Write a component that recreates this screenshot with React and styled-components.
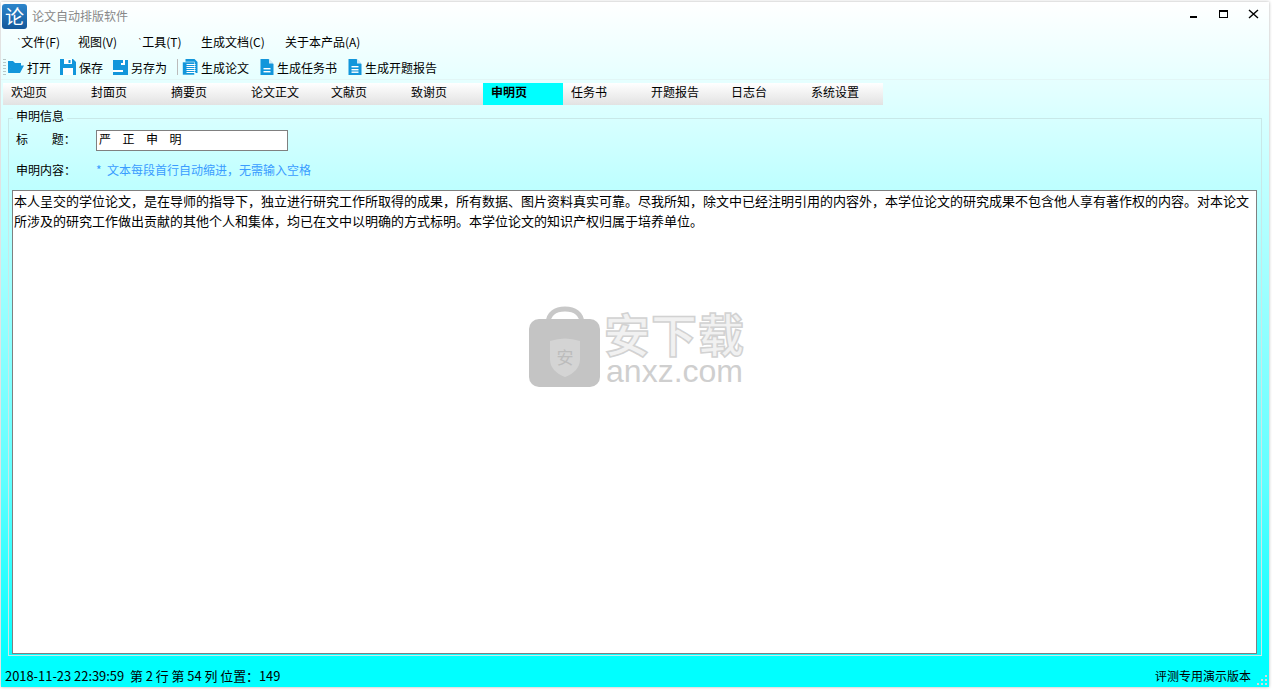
import React from "react";
import styled, { createGlobalStyle } from "styled-components";

const Global = createGlobalStyle`
  html, body {
    margin: 0;
    padding: 0;
    background: #fff;
    overflow: hidden;
  }
`;

const Page = styled.div`
  width: 1275px;
  height: 696px;
  box-sizing: border-box;
  padding: 2px 6px 9px 1px;
  background: #fff;
  font-family: "Noto Sans CJK SC", "Liberation Sans", sans-serif;
  font-size: 12px;
  color: #000;
`;

const Win = styled.div`
  position: relative;
  height: 100%;
  display: flex;
  flex-direction: column;
  box-sizing: border-box;
  background: linear-gradient(#fff 0, #e2ffff 90px, #c0ffff 180px, #60ffff 480px, #0ff 660px);
  box-shadow: 0 0 3px rgba(0, 0, 0, 0.3);
`;

const TitleBar = styled.div`
  height: 28px;
  display: flex;
  align-items: center;
  padding-left: 1px;
  flex: none;
`;

const Logo = styled.div`
  width: 25px;
  height: 25px;
  border-radius: 3px;
  background: linear-gradient(#2c86cc, #14589a);
  color: #fff;
  font-size: 19px;
  line-height: 24px;
  text-align: center;
`;

const TitleText = styled.span`
  margin-left: 5px;
  font-size: 12px;
  color: #888;
  margin-top: -2px;
`;

const WinButtons = styled.div`
  margin-left: auto;
  display: flex;
  align-items: center;
  padding-right: 10px;
  margin-top: -4px;
`;

const WinButton = styled.svg`
  display: block;
  margin-left: ${(p) => p.$left}px;
`;

const MenuBar = styled.div`
  height: 25px;
  box-sizing: border-box;
  padding: 0 0 2px 16px;
  display: flex;
  align-items: center;
  flex: none;
`;

const MenuItem = styled.span`
  width: ${(p) => p.$width}px;
  flex: none;
`;

const Tick = styled.span`
  font-size: 7px;
  vertical-align: 3px;
`;

const ToolBar = styled.div`
  height: 25px;
  box-sizing: border-box;
  display: flex;
  align-items: center;
  flex: none;
  padding-left: 2px;
  border-bottom: 1px solid #e2f6f6;
`;

const ToolGrip = styled.div`
  width: 3px;
  height: 16px;
  margin-right: 1px;
  background: repeating-linear-gradient(#b8c8c8 0 1px, transparent 1px 3px);
`;

const ToolItem = styled.div`
  display: flex;
  align-items: center;
  gap: 3px;
  margin-right: ${(p) => p.$gap}px;
`;

const ToolSep = styled.div`
  width: 1px;
  height: 16px;
  background: #bbb;
  margin-right: 4px;
`;

const TabBar = styled.div`
  height: 22px;
  margin: 3px 0 0 2px;
  display: flex;
  flex: none;
  width: 880px;
`;

const Tab = styled.div`
  width: 80px;
  height: 22px;
  box-sizing: border-box;
  padding-left: 8px;
  line-height: 17px;
  font-size: 12px;
  font-weight: ${(p) => (p.$active ? 700 : 400)};
  background: ${(p) => (p.$active ? "#0ff" : "linear-gradient(#fff, #e2e2e2)")};
`;

const Group = styled.fieldset`
  flex: 1;
  margin: 2.5px 7px 0 7px;
  padding: 0 4px 1px 3px;
  border: 1px solid #c8e8e8;
  min-height: 0;
  min-width: 0;
  display: flex;
  flex-direction: column;
`;

const Legend = styled.legend`
  margin-left: 1px;
  padding: 0 3px 6px 3px;
  font-size: 12px;
  line-height: 15px;
`;

const FieldRow = styled.div`
  height: ${(p) => p.$height}px;
  display: flex;
  align-items: center;
  margin-left: 4px;
  margin-top: ${(p) => p.$top}px;
  flex: none;
`;

const Label = styled.span`
  width: 80px;
  flex: none;
  margin-top: ${(p) => p.$top}px;
  word-spacing: ${(p) => (p.$wide ? "21px" : "0")};
`;

const TitleInput = styled.div`
  width: 192px;
  height: 21px;
  box-sizing: border-box;
  border: 1px solid #808080;
  background: #fff;
  padding-left: 2px;
  line-height: 16px;
  letter-spacing: 0.85px;
  white-space: pre;
`;

const Hint = styled.span`
  color: #3a9cff;
  white-space: pre;
  margin-top: -2px;
`;

const Editor = styled.div`
  flex: 1;
  margin-top: 9px;
  border: 1px solid #808080;
  background: #fff;
  padding: 0 1px;
  font-size: 13px;
  line-height: 20px;
  min-height: 0;
`;

const StatusBar = styled.div`
  height: 31px;
  box-sizing: border-box;
  flex: none;
  display: flex;
  align-items: center;
  padding: 7px 18px 0 4px;
  justify-content: space-between;
  font-size: 12.9px;
`;

const StatusRight = styled.span`
  font-size: 12px;
`;

const Grip = styled.svg`
  position: absolute;
  right: 1px;
  bottom: 1px;
`;

const Mark = styled.div`
  position: absolute;
  left: 528px;
  top: 304px;
  display: flex;
  align-items: center;
  gap: 3px;
  pointer-events: none;
`;

const MarkWords = styled.div`
  display: flex;
  flex-direction: column;
  align-items: center;
  color: #cfcfcf;
`;

const MarkCn = styled.div`
  font-size: 46px;
  line-height: 46px;
  font-weight: 700;
  letter-spacing: 1px;
  color: #f1f1f1;
  -webkit-text-stroke: 1.5px #d2d2d2;
`;

const MarkEn = styled.div`
  font-family: "Liberation Sans", sans-serif;
  font-size: 32px;
  line-height: 28px;
  margin-top: 2px;
`;

const Blue = "#1296db";

const FolderIcon = () => (
  <svg width="17" height="16" viewBox="0 0 17 16">
    <path d="M1 2h5l2 2h6v3H5L1 14z" fill={Blue} />
    <path d="M4.5 6.5H17L13 14H1z" fill={Blue} />
  </svg>
);

const SaveIcon = () => (
  <svg width="16" height="16" viewBox="0 0 16 16">
    <path d="M0 0h13l3 3v13H0z" fill={Blue} />
    <rect x="4" y="0" width="8" height="5" fill="#fff" />
    <rect x="8.5" y="1" width="2" height="3" fill={Blue} />
    <rect x="3" y="9" width="10" height="7" fill="#fff" />
  </svg>
);

const SaveAsIcon = () => (
  <svg width="15" height="15" viewBox="0 0 15 15">
    <rect width="15" height="15" fill={Blue} />
    <rect x="8" y="0" width="4" height="5" fill="#fff" />
    <rect x="8" y="0" width="2" height="3" fill={Blue} />
    <rect x="0" y="10" width="10" height="2" fill="#fff" />
  </svg>
);

const StackIcon = () => (
  <svg width="16" height="16" viewBox="0 0 15 16">
    <path d="M3 0h9l3 3v11H3z" fill={Blue} />
    <rect x="0" y="3" width="12" height="13" fill={Blue} stroke="#eaffff" strokeWidth="0.6" />
    <rect x="4" y="5" width="9" height="1" fill="#fff" />
    <rect x="4" y="7" width="9" height="1" fill="#fff" />
    <rect x="4" y="9" width="9" height="1" fill="#fff" />
    <rect x="4" y="11" width="9" height="1" fill="#fff" />
    <rect x="4" y="13" width="9" height="1" fill="#fff" />
  </svg>
);

const DocIcon = ({ lines }) => (
  <svg width="14" height="16" viewBox="0 0 13 16">
    <path d="M0 0h8l5 5v11H0z" fill={Blue} />
    <path d="M8.5 0v4.5H13z" fill="#cfeaf7" />
    {lines.map((y) => (
      <rect key={y} x="3" y={y} width="7" height="1.4" fill="#fff" />
    ))}
  </svg>
);

const TABS = ["欢迎页", "封面页", "摘要页", "论文正文", "文献页", "致谢页", "申明页", "任务书", "开题报告", "日志台", "系统设置"];
const MENUS = [
  { label: "文件(F)", width: 61, tick: true },
  { label: "视图(V)", width: 60 },
  { label: "工具(T)", width: 63, tick: true },
  { label: "生成文档(C)", width: 84 },
  { label: "关于本产品(A)", width: 90 },
];

export default function App() {
  return (
    <Page>
      <Global />
      <Win>
        <TitleBar>
          <Logo>论</Logo>
          <TitleText>论文自动排版软件</TitleText>
          <WinButtons>
            <WinButton width="8" height="10" viewBox="0 0 8 10"><rect x="0" y="7" width="7" height="2" fill="#000" /></WinButton>
            <WinButton $left={21} width="10" height="10" viewBox="0 0 10 10"><rect x="0.5" y="1.5" width="8" height="7" fill="none" stroke="#000" /><rect x="0" y="1" width="9" height="2" fill="#000" /></WinButton>
            <WinButton $left={19} width="11" height="10" viewBox="0 0 11 10"><path d="M1 1l9 8M10 1l-9 8" stroke="#000" strokeWidth="1.4" /></WinButton>
          </WinButtons>
        </TitleBar>
        <MenuBar>
          {MENUS.map((m) => (
            <MenuItem key={m.label} $width={m.width}>
              {m.tick && <Tick>`</Tick>}
              {m.label}
            </MenuItem>
          ))}
        </MenuBar>
        <ToolBar>
          <ToolGrip />
          <ToolItem $gap={9}><FolderIcon />打开</ToolItem>
          <ToolItem $gap={10}><SaveIcon />保存</ToolItem>
          <ToolItem $gap={10}><SaveAsIcon />另存为</ToolItem>
          <ToolSep />
          <ToolItem $gap={11}><StackIcon />生成论文</ToolItem>
          <ToolItem $gap={11}><DocIcon lines={[9, 12]} />生成任务书</ToolItem>
          <ToolItem $gap={0}><DocIcon lines={[7, 10, 12.5]} />生成开题报告</ToolItem>
        </ToolBar>
        <TabBar>
          {TABS.map((t) => (
            <Tab key={t} $active={t === "申明页"}>{t}</Tab>
          ))}
        </TabBar>
        <Group>
          <Legend>申明信息</Legend>
          <FieldRow $height={21} $top={1.5}>
            <Label $wide $top={-4}>标 题：</Label>
            <TitleInput>严   正   申   明</TitleInput>
          </FieldRow>
          <FieldRow $height={22} $top={8}>
            <Label $top={-2}>申明内容：</Label>
            <Hint>*  文本每段首行自动缩进，无需输入空格</Hint>
          </FieldRow>
          <Editor>
            本人呈交的学位论文，是在导师的指导下，独立进行研究工作所取得的成果，所有数据、图片资料真实可靠。尽我所知，除文中已经注明引用的内容外，本学位论文的研究成果不包含他人享有著作权的内容。对本论文所涉及的研究工作做出贡献的其他个人和集体，均已在文中以明确的方式标明。本学位论文的知识产权归属于培养单位。
          </Editor>
        </Group>
        <StatusBar>
          <span>2018-11-23 22:39:59&nbsp; 第 2 行 第 54 列 位置：149</span>
          <StatusRight>评测专用演示版本</StatusRight>
        </StatusBar>
        <Grip width="12" height="12" viewBox="0 0 12 12">
          {[[9, 1], [5, 5], [9, 5], [1, 9], [5, 9], [9, 9]].map(([x, y]) => (
            <rect key={`${x}-${y}`} x={x} y={y} width="2" height="2" fill="#d8d8d8" />
          ))}
        </Grip>
        <Mark>
          <svg width="72" height="82" viewBox="0 0 72 82">
            <path d="M19 18C19 7 27 3 36 3s17 4 17 15" fill="none" stroke="#c8c8c8" strokeWidth="5" />
            <rect x="0" y="13" width="71" height="68" rx="10" fill="#c4c4c4" />
            <path d="M21 35q15-5 30 0v18q0 12-15 18q-15-6-15-18z" fill="#d4d4d4" />
            <text x="36" y="58" fontSize="17" fill="#bcbcbc" textAnchor="middle" fontFamily="Noto Sans CJK SC">安</text>
          </svg>
          <MarkWords>
            <MarkCn>安下载</MarkCn>
            <MarkEn>anxz.com</MarkEn>
          </MarkWords>
        </Mark>
      </Win>
    </Page>
  );
}
